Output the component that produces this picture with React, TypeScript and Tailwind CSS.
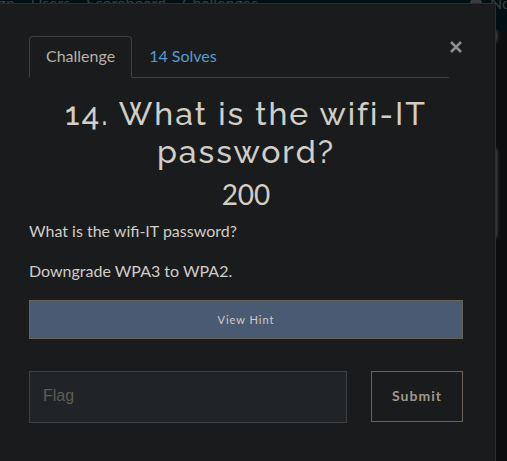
import { useState } from "react";

const links = ["Campaign", "Users", "Scoreboard", "Challenges"];

function PageBehind() {
  return (
    <div className="min-h-screen bg-[#0c0d0f]" aria-hidden="true">
      <header className="flex h-[31px] justify-between bg-[#010f14] text-base leading-6 text-[#393d3e]">
        <nav className="-mt-[9px] -ml-[55px] flex gap-4">
          {links.map((l) => (
            <span key={l}>{l}</span>
          ))}
        </nav>
        <div className="-mt-[9px] flex w-[37px] gap-2 whitespace-nowrap">
          <svg width="12" height="14" viewBox="0 0 12 14" fill="currentColor" className="shrink-0">
            <path d="M6 0a1 1 0 0 1 1 1a4 4 0 0 1 3 4c0 3 .6 4 2 6v3H0v-3c1.400-2 2-3 2-6a4 4 0 0 1 3-4a1 1 0 0 1 1-1z" />
          </svg>
          <span>Notifications</span>
        </div>
      </header>
      <div className="mr-[11px] h-[10px] bg-[#2c2d2f] shadow-[0_0_4px_#77777a]" />
      <div className="mt-[108px] mr-[11px] h-[88px] bg-[#2c2d2f] shadow-[0_0_4px_#77777a]" />
    </div>
  );
}

export default function App() {
  const [flag, setFlag] = useState("");
  return (
    <div className="relative overflow-hidden font-[Lato,sans-serif] text-base leading-6 text-[#d1cdc7]">
      <PageBehind />
      <div
        role="dialog"
        aria-label="Challenge"
        className="absolute top-[3px] right-[11px] -bottom-px -left-px border border-[#2a2c2e] bg-[#1a1b1d] pt-8 pr-8 pb-8 pl-[29px]"
      >
        <div className="flex items-start">
          <div role="tablist" className="flex grow border-b border-[#3c4042]">
            <button role="tab" aria-selected="true" className="-mb-px h-[42px] rounded-t border border-[#3c4042] border-b-[#1a1b1d] px-4 pb-0.5 text-[#b8b2a8]">
              Challenge
            </button>
            <button role="tab" aria-selected="false" className="h-10 px-[17px] text-[#589bd0]">
              14 Solves
            </button>
          </div>
          <button aria-label="Close" className="mt-[5px] flex w-[14px] justify-center text-[#8f8f8f]">
            <svg width="12" height="12" viewBox="0 0 12 12" stroke="currentColor" strokeWidth="2.500">
              <path d="M1 1L11 11M11 1L1 11" />
            </svg>
          </button>
        </div>
        <h2 className="mt-[17px] text-center font-[Raleway,Lato,sans-serif] text-[32px] leading-[38px] font-medium tracking-[2px]">
          14. What is the wifi-IT password?
        </h2>
        <h3 className="mt-[6px] text-center text-[28px] leading-[34px]">200</h3>
        <p className="mt-2">What is the wifi-IT password?</p>
        <p className="mt-4">Downgrade WPA3 to WPA2.</p>
        <button className="mt-[17px] h-[39px] w-full border border-[#6b6257] bg-[#495a72] text-[11px] tracking-[1px]">
          View Hint
        </button>
        <form className="mt-8 flex items-start gap-6" onSubmit={(e) => e.preventDefault()}>
          <input
            aria-label="Flag"
            placeholder="Flag"
            value={flag}
            onChange={(e) => setFlag(e.target.value)}
            className="h-[52px] min-w-0 grow border border-[#3c4042] bg-[#202427] px-[13px] pb-0.5 font-['Liberation_Sans',sans-serif] outline-none placeholder:text-[#5f5c56]"
          />
          <button type="submit" className="h-[51px] w-[92px] border border-[#6b6257] pb-0.5 text-sm font-bold tracking-[1px] text-[#a09789]">
            Submit
          </button>
        </form>
      </div>
    </div>
  );
}
